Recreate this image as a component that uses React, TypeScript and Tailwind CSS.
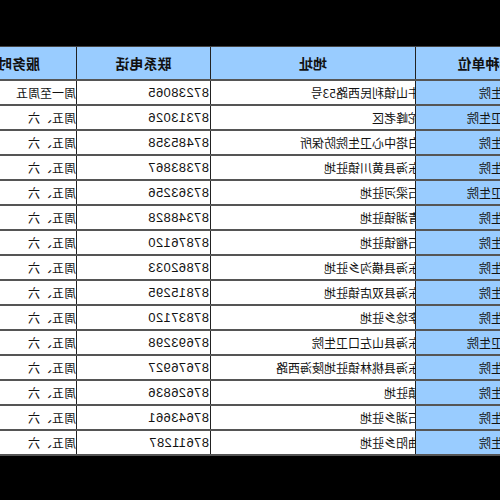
import React from 'react';

// Table is drawn in reading order, then the whole sheet is mirrored (the screenshot is flipped)
const rows = [
  { unitLong: false, addr: '牛山镇利民西路53号', phone: '87238065', time: '周一至周五' },
  { unitLong: true, addr: '驼峰老区', phone: '87313026', time: '周五、六' },
  { unitLong: false, addr: '白塔中心卫生院防保所', phone: '87485358', time: '周五、六' },
  { unitLong: false, addr: '东海县黄川镇驻地', phone: '87383867', time: '周五、六' },
  { unitLong: true, addr: '石梁河驻地', phone: '87363256', time: '周五、六' },
  { unitLong: false, addr: '青湖镇驻地', phone: '87348828', time: '周五、六' },
  { unitLong: false, addr: '石榴镇驻地', phone: '87876120', time: '周五、六' },
  { unitLong: false, addr: '东海县横沟乡驻地', phone: '87862033', time: '周五、六' },
  { unitLong: false, addr: '东海县双店镇驻地', phone: '87815295', time: '周五、六' },
  { unitLong: false, addr: '李埝乡驻地', phone: '87837120', time: '周五、六' },
  { unitLong: true, addr: '东海县山左口卫生院', phone: '87693298', time: '周五、六' },
  { unitLong: false, addr: '东海县桃林镇驻地陵海西路', phone: '87676927', time: '周五、六' },
  { unitLong: false, addr: '镇驻地', phone: '87626836', time: '周五、六' },
  { unitLong: false, addr: '石湖乡驻地', phone: '87643661', time: '周五、六' },
  { unitLong: false, addr: '曲阳乡驻地', phone: '87611287', time: '周五、六' },
];

export default function App() {
  return (
    <div className="w-[500px] h-[500px] bg-black overflow-hidden">
      <div className="-scale-x-100 w-[500px] h-[500px] overflow-hidden pt-[46px]">
        <div className="ml-[-55px] w-[607px] border-t border-[#444] font-['Noto_Sans_CJK_SC',sans-serif] text-[12px] leading-none text-[#111]">
          {/* header */}
          <div className="flex h-[34px] bg-[#99ccff] border-b-2 border-[#555] font-bold text-[14px]">
            <div className="w-[140px] shrink-0 border-r border-[#222] flex items-center justify-center">接种单位</div>
            <div className="w-[205px] shrink-0 border-r border-[#222] flex items-center justify-center">地址</div>
            <div className="w-[134px] shrink-0 border-r border-[#222] flex items-center justify-center">联系电话</div>
            <div className="w-[128px] shrink-0 flex items-center justify-center">服务时间</div>
          </div>

          {rows.map((r, i) => (
            <div key={i} className="flex h-[25px] border-b-2 border-[#555] bg-white">
              <div
                className={`w-[140px] shrink-0 bg-[#99ccff] border-r border-[#222] flex items-center justify-end overflow-hidden ${
                  r.unitLong ? 'pr-[51px]' : 'pr-[63px]'
                }`}
              >
                <span className="whitespace-nowrap">中心卫生院</span>
              </div>
              <div className="w-[205px] shrink-0 border-r border-[#222] flex items-center overflow-hidden">
                <span className="ml-[-5px] whitespace-nowrap">{r.addr}</span>
              </div>
              <div className="w-[134px] shrink-0 border-r border-[#222] flex items-center pl-[1px] font-['Liberation_Sans',sans-serif] text-[13px] tracking-[0.4px]">
                {r.phone}
              </div>
              <div className="w-[128px] shrink-0 flex items-center whitespace-nowrap">{r.time}</div>
            </div>
          ))}
        </div>
      </div>
    </div>
  );
}
